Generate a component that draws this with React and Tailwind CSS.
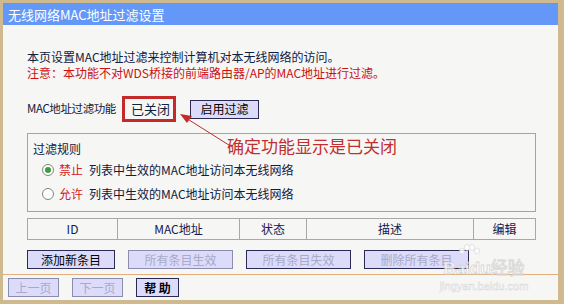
import { Fragment } from 'react'

const cjk = { fontFamily: '"Noto Sans CJK SC", "DejaVu Sans", sans-serif' }

const Btn = ({ label, w, off, dim, bold }) => {
  return (
    <div
      className={`h-[19px] flex items-center justify-center border bg-[#dcdcfa] text-[12px] leading-none whitespace-nowrap ${
        off ? 'text-[#a8a8c8]' : 'text-black'
      } ${dim ? 'border-[#8c8cb0]' : 'border-[#2a2a55]'} ${bold ? 'font-bold' : ''}`}
      style={{ width: w }}
    >
      {label}
    </div>
  )
}

const Radio = ({ checked }) => (
  <div className="w-[12px] h-[12px] rounded-full border border-[#7a8a7a] bg-white flex items-center justify-center">
    {checked && <div className="w-[6px] h-[6px] rounded-full bg-[#3f9a3f]" />}
  </div>
)

const App = () => {
  return (
    <div
      className="relative w-[564px] h-[304px] bg-[#cfb98f] pl-[3px] pr-[6px] pt-[3px] pb-[4px] overflow-hidden"
      style={cjk}
    >
      <div className="w-full h-full flex flex-col bg-[#f6f6f5]">
        {/* title bar */}
        <div className="h-[22px] shrink-0 bg-[#6398f8] border-t border-[#7f95a8] text-white text-[13px] flex items-center pl-[5px]">
          无线网络MAC地址过滤设置
        </div>

        <div className="flex-1 flex flex-col pl-[24px] pr-[18px] pt-[24px]">
          <div className="text-[12px] leading-[16px] text-[#102040]">
            本页设置MAC地址过滤来控制计算机对本无线网络的访问。
          </div>
          <div className="text-[12px] leading-[16px] text-[#cc1010]">
            注意：本功能不对WDS桥接的前端路由器/AP的MAC地址进行过滤。
          </div>

          <div className="flex items-center mt-[15px] h-[26px] text-[12px] text-[#102040]">
            <span className="w-[95px] whitespace-nowrap text-[11.5px] tracking-[-0.4px]">MAC地址过滤功能</span>
            <div className="w-[54px] h-[26px] border-[3px] border-[#c42a2a] flex items-center pl-[6px] text-[13px]">
              已关闭
            </div>
            <div className="ml-[14px]">
              <Btn label="启用过滤" w={69} />
            </div>
          </div>

          <div className="mt-[11px] w-[509px] h-[79px] border border-[#a4a4a4] pl-[5px] pt-[6px] text-[12px] text-[#102040]">
            <div className="h-[18px] leading-[18px]">过滤规则</div>
            <div className="flex items-center h-[24px] pl-[9px] gap-[5px]">
              <Radio checked />
              <span className="text-[#d42020] mr-[1px]">禁止</span>
              <span>列表中生效的MAC地址访问本无线网络</span>
            </div>
            <div className="flex items-center h-[24px] pl-[9px] gap-[5px]">
              <Radio />
              <span className="text-[#d42020] mr-[1px]">允许</span>
              <span>列表中生效的MAC地址访问本无线网络</span>
            </div>
          </div>

          <div className="mt-[6px] w-[509px] h-[22px] flex border border-[#a8a8a8] text-[12px] text-[#102050]">
            <div className="w-[90px] flex items-center justify-center border-r border-[#a8a8a8]">ID</div>
            <div className="w-[122px] flex items-center justify-center border-r border-[#a8a8a8]">MAC地址</div>
            <div className="w-[67px] flex items-center justify-center border-r border-[#a8a8a8]">状态</div>
            <div className="w-[167px] flex items-center justify-center border-r border-[#a8a8a8]">描述</div>
            <div className="flex-1 flex items-center justify-center">编辑</div>
          </div>

          <div className="mt-[10px] flex gap-[13px]">
            <Btn label="添加新条目" w={88} />
            <Btn label="所有条目生效" w={105} off dim />
            <Btn label="所有条目失效" w={105} off />
            <Btn label="删除所有条目" w={105} off />
          </div>
        </div>

        {/* bottom bar */}
        <div className="h-[26px] shrink-0 border-t border-[#e2b07c] flex items-center pl-[5px] gap-[13px]">
          <Btn label="上一页" w={51} off dim />
          <Btn label="下一页" w={51} off dim />
          <Btn label="帮 助" w={43} bold />
        </div>
      </div>

      {/* annotation arrow */}
      <svg className="absolute left-0 top-0 pointer-events-none" width="564" height="304">
        <line x1="232" y1="147" x2="186" y2="118" stroke="#b83030" strokeWidth="1" />
        <polygon points="180,114 192,116 187,123" fill="#c42a2a" />
      </svg>
      <div className="absolute left-[227px] top-[135px] text-[17px] leading-[22px] text-[#c03030] whitespace-nowrap">
        确定功能显示是已关闭
      </div>

      {/* watermark */}
      <div className="absolute left-[434px] top-[244px] w-[100px] pointer-events-none flex flex-col items-center opacity-80">
        <svg width="24" height="14" viewBox="0 0 24 14" className="ml-[-30px]">
          <g fill="#ffffff" stroke="#d4d4d4" strokeWidth="0.8">
            <ellipse cx="5" cy="7" rx="2.5" ry="3" />
            <ellipse cx="10" cy="3.5" rx="2.5" ry="3" />
            <ellipse cx="15" cy="3.5" rx="2.5" ry="3" />
            <ellipse cx="20" cy="7" rx="2.5" ry="3" />
          </g>
        </svg>
        <div
          className="whitespace-nowrap text-white text-[17px] font-bold leading-[18px]"
          style={{ fontFamily: '"Liberation Sans", sans-serif', WebkitTextStroke: '0.8px #cfcfcf' }}
        >
          Baidu<span style={cjk} className="font-normal">经验</span>
        </div>
        <div
          className="whitespace-nowrap text-white text-[11px] leading-[12px] mt-[2px]"
          style={{ fontFamily: '"Liberation Sans", sans-serif', WebkitTextStroke: '0.5px #d4d4d4' }}
        >
          jingyan.baidu.com
        </div>
      </div>
    </div>
  )
}
export default App
